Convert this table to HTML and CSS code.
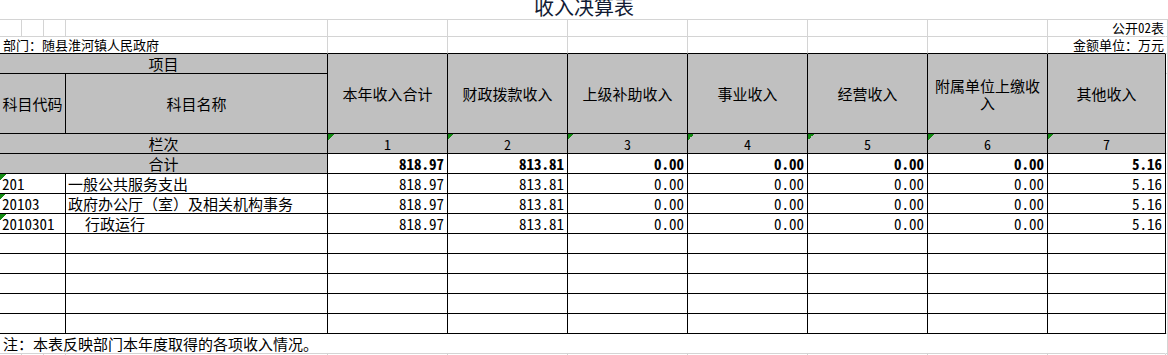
FILE: index.html
```html
<!DOCTYPE html>
<html lang="zh-CN">
<head>
<meta charset="utf-8">
<title>收入决算表</title>
<link rel="stylesheet" href="styles.css">
</head>
<body>
<table class="sheet">
  <colgroup>
    <col class="c-a"><col class="c-b"><col class="c-c"><col class="c-d">
    <col class="c-n"><col class="c-n"><col class="c-n"><col class="c-n"><col class="c-n"><col class="c-n">
    <col class="c-k"><col class="c-l">
  </colgroup>
  <tr class="r-title">
    <td colspan="12" class="title"><div class="title-box"><span>收入决算表</span></div></td>
  </tr>
  <tr class="r-meta">
    <td></td><td></td><td></td><td></td>
    <td></td><td></td><td></td><td></td><td></td><td></td>
    <td class="right nb">公开02表</td><td class="edge"></td>
  </tr>
  <tr class="r-meta r-meta-last">
    <td colspan="4" class="dept">部门：随县淮河镇人民政府</td>
    <td></td><td></td><td></td><td></td><td></td><td></td>
    <td class="right nb">金额单位：万元</td><td class="edge"></td>
  </tr>
  <tr class="r-h1">
    <td colspan="4" class="t hd">项目</td>
    <td rowspan="2" class="t hd">本年收入合计</td>
    <td rowspan="2" class="t hd">财政拨款收入</td>
    <td rowspan="2" class="t hd">上级补助收入</td>
    <td rowspan="2" class="t hd">事业收入</td>
    <td rowspan="2" class="t hd">经营收入</td>
    <td rowspan="2" class="t hd wrap">附属单位上缴收入</td>
    <td rowspan="2" class="t hd">其他收入</td>
    <td class="edge"></td>
  </tr>
  <tr class="r-h2">
    <td colspan="3" class="t hd">科目代码</td>
    <td class="t hd">科目名称</td>
    <td class="edge"></td>
  </tr>
  <tr class="r-row">
    <td colspan="4" class="t hd">栏次</td>
    <td class="t hd idx mk">1</td>
    <td class="t hd idx mk">2</td>
    <td class="t hd idx mk">3</td>
    <td class="t hd idx mk">4</td>
    <td class="t hd idx mk">5</td>
    <td class="t hd idx mk">6</td>
    <td class="t hd idx mk">7</td>
    <td class="edge"></td>
  </tr>
  <tr class="r-row">
    <td colspan="4" class="t hd">合计</td>
    <td class="t num bold">818.97</td>
    <td class="t num bold">813.81</td>
    <td class="t num bold">0.00</td>
    <td class="t num bold">0.00</td>
    <td class="t num bold">0.00</td>
    <td class="t num bold">0.00</td>
    <td class="t num bold">5.16</td>
    <td class="edge"></td>
  </tr>
  <tr class="r-row">
    <td colspan="3" class="t code mk">201</td>
    <td class="t name">一般公共服务支出</td>
    <td class="t num">818.97</td>
    <td class="t num">813.81</td>
    <td class="t num">0.00</td>
    <td class="t num">0.00</td>
    <td class="t num">0.00</td>
    <td class="t num">0.00</td>
    <td class="t num">5.16</td>
    <td class="edge"></td>
  </tr>
  <tr class="r-row">
    <td colspan="3" class="t code mk">20103</td>
    <td class="t name">政府办公厅（室）及相关机构事务</td>
    <td class="t num">818.97</td>
    <td class="t num">813.81</td>
    <td class="t num">0.00</td>
    <td class="t num">0.00</td>
    <td class="t num">0.00</td>
    <td class="t num">0.00</td>
    <td class="t num">5.16</td>
    <td class="edge"></td>
  </tr>
  <tr class="r-row">
    <td colspan="3" class="t code mk">2010301</td>
    <td class="t name indent">行政运行</td>
    <td class="t num">818.97</td>
    <td class="t num">813.81</td>
    <td class="t num">0.00</td>
    <td class="t num">0.00</td>
    <td class="t num">0.00</td>
    <td class="t num">0.00</td>
    <td class="t num">5.16</td>
    <td class="edge"></td>
  </tr>
  <tr class="r-row"><td colspan="3" class="t"></td><td class="t"></td><td class="t"></td><td class="t"></td><td class="t"></td><td class="t"></td><td class="t"></td><td class="t"></td><td class="t"></td><td class="edge"></td></tr>
  <tr class="r-row"><td colspan="3" class="t"></td><td class="t"></td><td class="t"></td><td class="t"></td><td class="t"></td><td class="t"></td><td class="t"></td><td class="t"></td><td class="t"></td><td class="edge"></td></tr>
  <tr class="r-row"><td colspan="3" class="t"></td><td class="t"></td><td class="t"></td><td class="t"></td><td class="t"></td><td class="t"></td><td class="t"></td><td class="t"></td><td class="t"></td><td class="edge"></td></tr>
  <tr class="r-row"><td colspan="3" class="t"></td><td class="t"></td><td class="t"></td><td class="t"></td><td class="t"></td><td class="t"></td><td class="t"></td><td class="t"></td><td class="t"></td><td class="edge"></td></tr>
  <tr class="r-row"><td colspan="3" class="t"></td><td class="t"></td><td class="t"></td><td class="t"></td><td class="t"></td><td class="t"></td><td class="t"></td><td class="t"></td><td class="t"></td><td class="edge"></td></tr>
  <tr class="r-row">
    <td colspan="11" class="note nb">注：本表反映部门本年度取得的各项收入情况。</td><td class="edge"></td>
  </tr>
  <tr class="r-tail">
    <td></td><td></td><td></td><td></td>
    <td></td><td></td><td></td><td></td><td></td><td></td>
    <td></td><td class="edge"></td>
  </tr>
</table>
</body>
</html>
```
FILE: styles.css
```css
html, body {
  margin: 0;
  padding: 0;
  background: #ffffff;
}

body {
  width: 1168px;
  height: 355px;
  overflow: hidden;
  font-family: "Noto Sans Mono CJK SC", "Noto Sans CJK SC", "Liberation Mono", monospace;
  font-size: 15px;
  color: #000000;
}

.sheet {
  border-collapse: separate;
  border-spacing: 0;
  table-layout: fixed;
  width: 1168px;
}

.c-a, .c-b, .c-c { width: 22px; }
.c-d { width: 262px; }
.c-n { width: 120px; }
.c-k { width: 118px; }
.c-l { width: 2px; }

.sheet td {
  box-sizing: border-box;
  padding: 0 2px;
  border-right: 1px solid #d4d4d4;
  border-bottom: 1px solid #d4d4d4;
  white-space: nowrap;
  overflow: hidden;
  line-height: 18px;
  vertical-align: bottom;
}

.sheet td.edge {
  padding: 0;
  border-right-color: #d4d4d4;
}

.sheet td.nb {
  border-right-color: transparent;
}

.r-title td { height: 20px; }
.r-meta td { height: 17px; line-height: 16px; font-size: 13px; overflow: visible; }
.r-meta-last td { border-bottom-color: #000000; }
.r-meta-last td.edge { border-bottom-color: #d4d4d4; }
.r-h1 td { height: 20px; }
.r-h2 td { height: 60px; }
.r-row td { height: 20px; }

.r-tail td {
  height: 1px;
  padding: 0;
  border-bottom: none;
  line-height: 0;
}

.sheet td.title {
  padding: 0;
  border-right: none;
  overflow: visible;
}

.title-box {
  height: 19px;
  display: flex;
  justify-content: center;
  align-items: flex-end;
}

.title-box span {
  font-size: 20px;
  line-height: 20px;
  margin-bottom: 2px;
  color: #111a33;
}

.sheet td.t {
  border-right-color: #000000;
  border-bottom-color: #000000;
}

.sheet td.hd {
  background-color: #c0c0c0;
  text-align: center;
  vertical-align: middle;
}

.sheet td.wrap {
  white-space: normal;
  line-height: 17px;
  padding: 0 6px;
}

.sheet td.idx {
  font-size: 14px;
}

.sheet td.mk {
  background-image: linear-gradient(135deg, #138a13 50%, transparent 50%);
  background-size: 6px 6px;
  background-repeat: no-repeat;
  background-position: 0 0;
}

.sheet td.num {
  text-align: right;
  padding-right: 3px;
}

.sheet td.bold {
  font-weight: 700;
}

.sheet td.code {
  padding-left: 2px;
}

.sheet td.name {
  padding-left: 2px;
}

.sheet td.indent {
  padding-left: 19px;
}

.sheet td.right {
  text-align: right;
  padding-right: 1px;
}

.sheet td.dept {
  padding-left: 3px;
}

.sheet td.note {
  padding-left: 3px;
  overflow: visible;
}
```
